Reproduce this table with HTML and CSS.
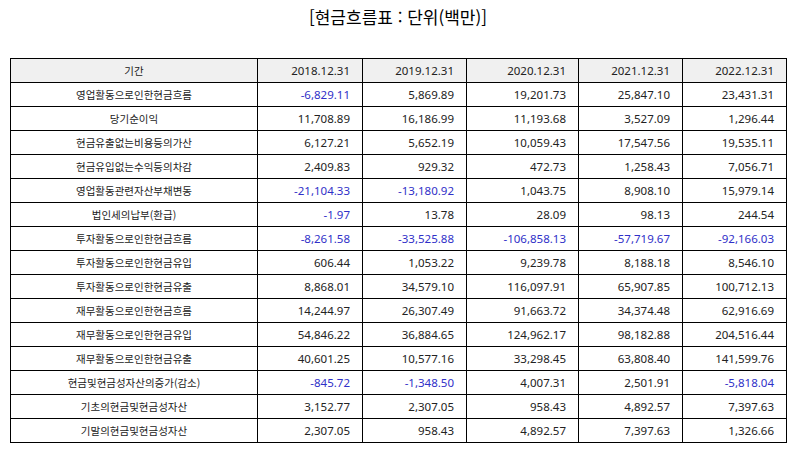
FILE: index.html
```html
<!DOCTYPE html>
<html lang="ko">
<head>
<meta charset="utf-8">
<title>현금흐름표</title>
<link rel="stylesheet" href="styles.css">
</head>
<body>
<h1 class="title">[현금흐름표 : 단위(백만)]</h1>
<table class="cf">
  <colgroup>
    <col class="c-label"><col class="c-y1"><col class="c-y2"><col class="c-y3"><col class="c-y4"><col class="c-y5">
  </colgroup>
  <thead>
    <tr><th class="lbl">기간</th><th>2018.12.31</th><th>2019.12.31</th><th>2020.12.31</th><th>2021.12.31</th><th>2022.12.31</th></tr>
  </thead>
  <tbody>
    <tr><td class="lbl">영업활동으로인한현금흐름</td><td class="neg">-6,829.11</td><td>5,869.89</td><td>19,201.73</td><td>25,847.10</td><td>23,431.31</td></tr>
    <tr><td class="lbl">당기순이익</td><td>11,708.89</td><td>16,186.99</td><td>11,193.68</td><td>3,527.09</td><td>1,296.44</td></tr>
    <tr><td class="lbl">현금유출없는비용등의가산</td><td>6,127.21</td><td>5,652.19</td><td>10,059.43</td><td>17,547.56</td><td>19,535.11</td></tr>
    <tr><td class="lbl">현금유입없는수익등의차감</td><td>2,409.83</td><td>929.32</td><td>472.73</td><td>1,258.43</td><td>7,056.71</td></tr>
    <tr><td class="lbl">영업활동관련자산부채변동</td><td class="neg">-21,104.33</td><td class="neg">-13,180.92</td><td>1,043.75</td><td>8,908.10</td><td>15,979.14</td></tr>
    <tr><td class="lbl">법인세의납부(환급)</td><td class="neg">-1.97</td><td>13.78</td><td>28.09</td><td>98.13</td><td>244.54</td></tr>
    <tr><td class="lbl">투자활동으로인한현금흐름</td><td class="neg">-8,261.58</td><td class="neg">-33,525.88</td><td class="neg">-106,858.13</td><td class="neg">-57,719.67</td><td class="neg">-92,166.03</td></tr>
    <tr><td class="lbl">투자활동으로인한현금유입</td><td>606.44</td><td>1,053.22</td><td>9,239.78</td><td>8,188.18</td><td>8,546.10</td></tr>
    <tr><td class="lbl">투자활동으로인한현금유출</td><td>8,868.01</td><td>34,579.10</td><td>116,097.91</td><td>65,907.85</td><td>100,712.13</td></tr>
    <tr><td class="lbl">재무활동으로인한현금흐름</td><td>14,244.97</td><td>26,307.49</td><td>91,663.72</td><td>34,374.48</td><td>62,916.69</td></tr>
    <tr><td class="lbl">재무활동으로인한현금유입</td><td>54,846.22</td><td>36,884.65</td><td>124,962.17</td><td>98,182.88</td><td>204,516.44</td></tr>
    <tr><td class="lbl">재무활동으로인한현금유출</td><td>40,601.25</td><td>10,577.16</td><td>33,298.45</td><td>63,808.40</td><td>141,599.76</td></tr>
    <tr><td class="lbl">현금및현금성자산의증가(감소)</td><td class="neg">-845.72</td><td class="neg">-1,348.50</td><td>4,007.31</td><td>2,501.91</td><td class="neg">-5,818.04</td></tr>
    <tr><td class="lbl">기초의현금및현금성자산</td><td>3,152.77</td><td>2,307.05</td><td>958.43</td><td>4,892.57</td><td>7,397.63</td></tr>
    <tr><td class="lbl">기말의현금및현금성자산</td><td>2,307.05</td><td>958.43</td><td>4,892.57</td><td>7,397.63</td><td>1,326.66</td></tr>
  </tbody>
</table>
</body>
</html>
```

FILE: styles.css
```css
html, body {
  margin: 0;
  padding: 0;
  background: #ffffff;
}
body {
  padding: 0 8px 0 10px;
  font-family: "Noto Sans", "Noto Sans CJK KR", sans-serif;
  color: #222222;
}
.title {
  margin: 0;
  height: 58px;
  box-sizing: border-box;
  padding-top: 4px;
  font-family: "Noto Sans CJK KR", sans-serif;
  font-weight: 400;
  font-size: 17px;
  line-height: 26px;
  text-align: center;
  color: #000000;
}
.cf {
  width: 776px;
  border-collapse: collapse;
  table-layout: fixed;
}
.c-label { width: 247px; }
.c-y1 { width: 105px; }
.c-y2 { width: 104px; }
.c-y3 { width: 112px; }
.c-y4 { width: 104px; }
.c-y5 { width: 104px; }
.cf th, .cf td {
  border: 1px solid #000000;
  height: 24px;
  padding: 0 12px 0 4px;
  box-sizing: border-box;
  font-size: 11.5px;
  font-weight: 400;
  line-height: 14px;
  text-align: right;
  white-space: nowrap;
}
.cf th {
  background: #f0f0f0;
}
.cf .lbl {
  text-align: center;
  padding: 0 4px;
  font-family: "Noto Sans CJK KR", sans-serif;
  font-size: 10.5px;
}
.cf .neg {
  color: #3030c8;
}
```
